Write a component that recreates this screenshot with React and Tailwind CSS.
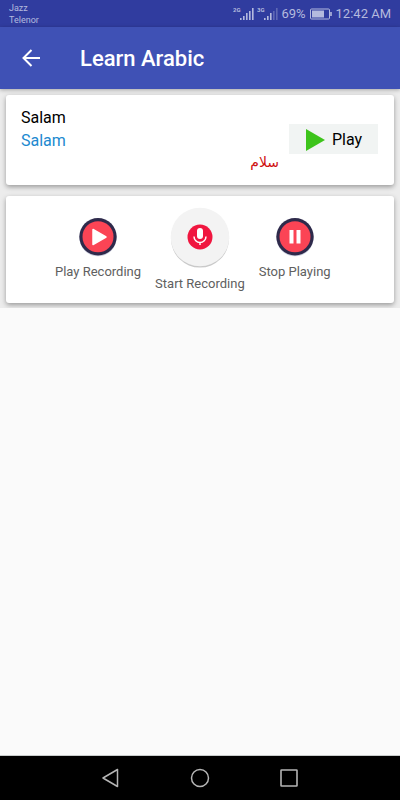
const RECORDER_ACTIONS = [
  { label: 'Play Recording', icon: 'play' },
  { label: 'Start Recording', icon: 'mic' },
  { label: 'Stop Playing', icon: 'pause' },
];

function Signal({ label, level }) {
  return (
    <svg width="21" height="16" viewBox="0 0 21 16" fill="#b4bade">
      <text x="0" y="6" fontSize="6" fontWeight="700" fontFamily="Roboto, sans-serif">{label}</text>
      {[2, 4, 7, 9, 12].map((h, i) => (
        <rect key={h} x={7 + i * 3} y={14 - h} width="1.6" height={h} opacity={i < level ? 1 : 0.35} />
      ))}
    </svg>
  );
}

function StatusBar() {
  return (
    <div className="flex h-[27px] items-center justify-between bg-[#303c9f] px-[9px] text-[#b4bade]">
      <div className="text-[9px] leading-[12px]">
        <div>Jazz</div>
        <div>Telenor</div>
      </div>
      <div className="flex items-center gap-[3px] text-[13px] leading-[16px]">
        <Signal label="2G" level={5} />
        <Signal label="3G" level={3} />
        <span>69%</span>
        <svg width="24" height="12" viewBox="0 0 24 12" fill="none" stroke="#b4bade">
          <rect x="1.5" y="1" width="19" height="10" rx="1" />
          <rect x="3" y="2.5" width="12" height="7" fill="#b4bade" stroke="none" />
          <path d="M22 4v4" strokeWidth="1.6" />
        </svg>
        <span>12:42 AM</span>
      </div>
    </div>
  );
}

function RecorderIcon({ name }) {
  if (name === 'mic') {
    return (
      <svg width="60" height="62" viewBox="0 0 60 62">
        <circle cx="30" cy="31.6" r="29" fill="#c9c9c9" />
        <circle cx="30" cy="30" r="29.3" fill="#f3f3f3" />
        <circle cx="30" cy="30" r="12.5" fill="#f0163f" />
        <rect x="27" y="21" width="6" height="11" rx="3" fill="#fff" />
        <path d="M24 29.5a6 6 0 0 0 12 0M30 35.5V38" fill="none" stroke="#fff" strokeWidth="1.5" />
      </svg>
    );
  }
  return (
    <svg width="40" height="40" viewBox="0 0 40 40">
      <circle cx="20" cy="20.8" r="18.5" fill="#ccd0df" />
      <circle cx="20" cy="19.8" r="18.7" fill="#2e2a4b" />
      <circle cx="20" cy="19.8" r="15.5" fill="#fb4455" />
      {name === 'play' ? (
        <path d="M15 12.5v15l13-7.5z" fill="#fff" stroke="#fff" strokeWidth="1.5" strokeLinejoin="round" />
      ) : (
        <path d="M14.500 13h4v13.500h-4zM21.500 13h4v13.500h-4z" fill="#fff" />
      )}
    </svg>
  );
}

function PhraseCard() {
  return (
    <section className="flex h-[90px] justify-between rounded-[3px] bg-white pr-4 pl-[15px] shadow-[0_2px_5px_rgba(0,0,0,0.35)]">
      <div className="pt-[11px] text-[16px] leading-[23px]">
        <p className="text-black">Salam</p>
        <p className="text-[#2189cf]">Salam</p>
      </div>
      <div className="flex items-start gap-[10px]">
        <p lang="ar" dir="rtl" className="pt-[57px] font-['DejaVu_Sans',sans-serif] text-[14px] leading-[20px] text-[#cf1010]">سلام</p>
        <button type="button" className="mt-[29px] flex h-[30px] w-[89px] items-center gap-[7px] bg-[#f1f4f3] pt-[2px] pl-[17px] text-[16px] leading-[28px] text-black">
          <svg width="19" height="22" viewBox="0 0 19 22">
            <path d="M0 0v22l19-11z" fill="#3dc41b" />
          </svg>
          Play
        </button>
      </div>
    </section>
  );
}

function RecorderCard() {
  return (
    <section className="flex h-[107px] items-start gap-[14px] rounded-[3px] bg-white pt-[11px] pl-[49px] shadow-[0_2px_5px_rgba(0,0,0,0.35)]">
      {RECORDER_ACTIONS.map(({ label, icon }) => (
        <button
          key={label}
          type="button"
          className={`flex flex-col items-center gap-[7px] text-[13px] leading-[16px] text-[#606060] ${icon === 'mic' ? '' : 'pt-[10px]'}`}
        >
          <RecorderIcon name={icon} />
          {label}
        </button>
      ))}
    </section>
  );
}

function NavBar() {
  return (
    <nav className="flex h-[45px] items-center justify-center gap-[65px] border-t border-[#c8cccb] bg-black">
      <button type="button" aria-label="Back">
        <svg width="24" height="24" viewBox="0 0 24 24" fill="none" stroke="#b5b5b5" strokeWidth="1.5" strokeLinejoin="round">
          <path d="M18.500 3.500v17L4 12z" />
        </svg>
      </button>
      <button type="button" aria-label="Home">
        <svg width="24" height="24" viewBox="0 0 24 24" fill="none" stroke="#b5b5b5" strokeWidth="1.5">
          <circle cx="12" cy="12" r="8.500" />
        </svg>
      </button>
      <button type="button" aria-label="Recent apps">
        <svg width="24" height="24" viewBox="0 0 24 24" fill="none" stroke="#b5b5b5" strokeWidth="1.6">
          <rect x="4" y="4" width="16" height="16" rx="0.500" />
        </svg>
      </button>
    </nav>
  );
}

export default function App() {
  return (
    <div className="flex min-h-screen flex-col bg-[#fafafa] font-[Roboto,sans-serif]">
      <StatusBar />
      <header className="z-10 flex h-[62px] items-center gap-[37px] bg-[#3f51b5] pl-[19px] text-white shadow-[0_1px_4px_rgba(0,0,0,0.3)]">
        <button type="button" aria-label="Back">
          <svg width="24" height="24" viewBox="0 0 24 24" fill="none" stroke="#fff" strokeWidth="2">
            <path d="M21 12H5M12.500 4l-8 8 8 8" />
          </svg>
        </button>
        <h1 className="text-[22px] font-medium">Learn Arabic</h1>
      </header>
      <main className="flex-1">
        <div className="flex flex-col gap-[11px] overflow-hidden bg-[#ececec] px-[6px] pt-[6px] pb-[5px]">
          <PhraseCard />
          <RecorderCard />
        </div>
      </main>
      <NavBar />
    </div>
  );
}
